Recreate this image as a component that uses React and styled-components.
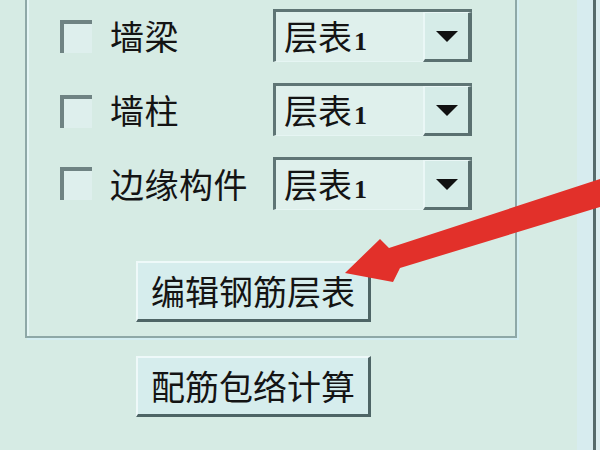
import React from "react";
import styled, { createGlobalStyle } from "styled-components";

const Global = createGlobalStyle`
  html, body {
    margin: 0;
    padding: 0;
    background: #d6ebe4;
  }
  body {
    font-family: "Noto Sans CJK SC", "Noto Sans", sans-serif;
    color: #141414;
  }
`;

const Page = styled.div`
  position: relative;
  width: 600px;
  height: 450px;
  overflow: hidden;
  display: flex;
  background: #d6ebe4;
`;

const Main = styled.div`
  flex: 1;
  padding-left: 25px;
  display: flex;
  flex-direction: column;
`;

const Side = styled.div`
  width: 23px;
  display: flex;
`;

const SideFace = styled.div`
  width: 16px;
  background: #d7ecef;
`;

const SideEdge = styled.div`
  width: 3px;
  background: #566b6b;
`;

const SideOuter = styled.div`
  flex: 1;
  background: #dbeef0;
`;

const Group = styled.div`
  margin-top: -20px;
  width: 492px;
  height: 358px;
  border: 2px solid #8ea8a7;
  box-shadow: inset 2px 2px 0 #e4f5f5, 2px 2px 0 #d4eef1;
  padding: 27px 0 0 33px;
  box-sizing: border-box;
  display: flex;
  flex-direction: column;
`;

const Rows = styled.div`
  display: flex;
  flex-direction: column;
  gap: 21px;
`;

const Row = styled.div`
  height: 53px;
  display: flex;
  align-items: center;
`;

const Check = styled.div`
  width: 28px;
  height: 29px;
  margin-right: 18px;
  border-top: 4px solid #6f8383;
  border-left: 4px solid #6f8383;
  background: #deefed;
  transform: translateY(${(p) => p.$shift}px);
`;

const Label = styled.div`
  width: 163px;
  font-size: 34px;
  line-height: 40px;
  letter-spacing: 0.5px;
`;

const Combo = styled.div`
  width: 199px;
  height: 53px;
  box-sizing: border-box;
  display: flex;
  border-top: 3px solid #5f7575;
  border-left: 3px solid #5f7575;
  border-bottom: 1px solid #e6f5f3;
  background: #dff0ec;
`;

const ComboText = styled.div`
  flex: 1;
  padding-left: 8px;
  font-size: 34px;
  line-height: 48px;
  white-space: nowrap;
`;

const Num = styled.span`
  font-family: "Liberation Serif", serif;
  font-weight: bold;
  font-size: 26px;
  margin-left: 2px;
`;

const DropButton = styled.div`
  width: 43px;
  box-sizing: content-box;
  border-top: 1px solid #eaf7f6;
  border-left: 2px solid #eaf7f6;
  border-bottom: 3px solid #5a7070;
  border-right: 4px solid #5a7070;
  margin-bottom: -1px;
  background: #d6ece8;
  display: flex;
  align-items: center;
  justify-content: center;
`;

const Triangle = styled.div`
  width: 0;
  height: 0;
  border-left: 11px solid transparent;
  border-right: 11px solid transparent;
  border-top: 11px solid #111;
`;

const PushButton = styled.div`
  width: 230px;
  height: 56px;
  margin-left: ${(p) => p.$left}px;
  margin-top: ${(p) => p.$top}px;
  background: #d6eded;
  border-top: 2px solid #eef9f9;
  border-left: 2px solid #eef9f9;
  border-bottom: 3px solid #4e6566;
  border-right: 3px solid #4e6566;
  display: flex;
  align-items: center;
  justify-content: center;
  font-size: 34px;
  line-height: 1;
  white-space: nowrap;
`;

const Arrow = styled.svg`
  position: absolute;
  left: 0;
  top: 0;
  pointer-events: none;
`;

const items = [
  { name: "墙梁", shift: 1 },
  { name: "墙柱", shift: 2 },
  { name: "边缘构件", shift: 0 },
];

export default function App() {
  return (
    <Page>
      <Global />
      <Main>
        <Group>
          <Rows>
            {items.map((it) => (
              <Row key={it.name}>
                <Check $shift={it.shift} />
                <Label>{it.name}</Label>
                <Combo>
                  <ComboText>
                    层表<Num>1</Num>
                  </ComboText>
                  <DropButton>
                    <Triangle />
                  </DropButton>
                </Combo>
              </Row>
            ))}
          </Rows>
          <PushButton $left={76} $top={51}>
            编辑钢筋层表
          </PushButton>
        </Group>
        <PushButton $left={111} $top={18}>
          配筋包络计算
        </PushButton>
      </Main>
      <Side>
        <SideFace />
        <SideEdge />
        <SideOuter />
      </Side>
      <Arrow width="600" height="450" viewBox="0 0 600 450">
        <polygon
          points="345,273 380,239 389,248 600,179 600,207 400,268 393,282"
          fill="#e2302a"
        />
      </Arrow>
    </Page>
  );
}
